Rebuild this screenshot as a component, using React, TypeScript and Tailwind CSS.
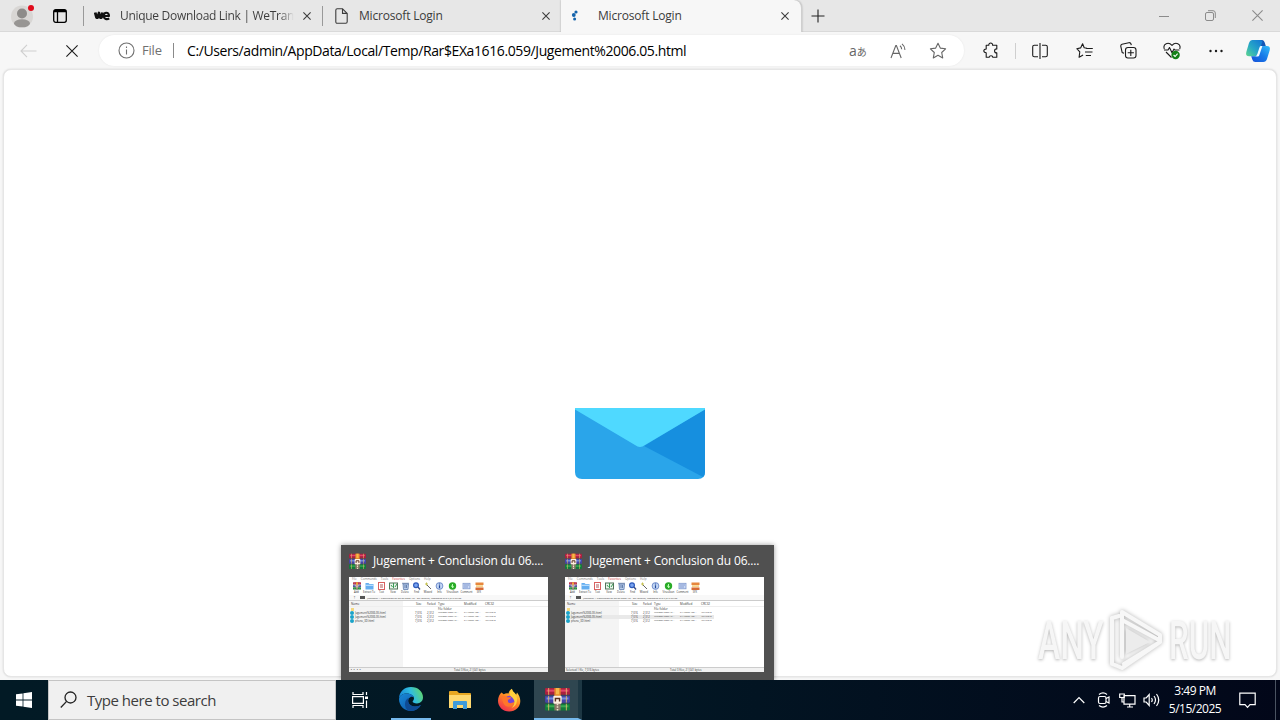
import React from "react";

type IconProps = { className?: string; w?: number; h?: number; children: React.ReactNode; sw?: number };

function Icon({ className = "", w = 20, h = 20, sw = 1.1, children }: IconProps) {
  return (
    <svg className={"shrink-0 " + className} width={w} height={h} viewBox={`0 0 ${w} ${h}`} fill="none" stroke="currentColor" strokeWidth={sw}>
      {children}
    </svg>
  );
}

function CloseX({ size = 8 }: { size?: number }) {
  return (
    <Icon w={size} h={size}>
      <path d={`M.4 .4L${size - 0.4} ${size - 0.4}M${size - 0.4} .4L.4 ${size - 0.4}`} />
    </Icon>
  );
}

function WinRar({ size }: { size: number }) {
  return (
    <svg className="shrink-0" width={size} height={size} viewBox="0 0 24 24">
      <rect x="0" y="1" width="24" height="6.500" rx="1" fill="#a8213f" />
      <rect x="1.500" y="2.500" width="21" height="2" fill="#e2456b" />
      <rect x="0" y="8.500" width="24" height="6.500" rx="1" fill="#4545a5" />
      <rect x="1.500" y="10" width="21" height="2" fill="#718de0" />
      <rect x="0" y="16" width="24" height="6.500" rx="1" fill="#137a3b" />
      <rect x="1.500" y="17.500" width="21" height="2" fill="#37aa50" />
      <path d="M3.500 1v21.500M20.500 1v21.500" stroke="#e8bd6a" strokeWidth=".8" strokeDasharray="6.500 1" />
      <rect x="9" y="1" width="6" height="9" fill="#e58a2a" />
      <rect x="10.500" y="1" width="3" height="6" fill="#f7b94a" />
      <rect x="9" y="15" width="6" height="7.500" fill="#8a7767" />
      <path d="M12 16v7" stroke="#efe3cc" strokeWidth="1.500" strokeDasharray="1.500 1" />
      <rect x="8" y="8.500" width="8" height="7.500" rx="1" fill="#fff0df" />
      <path d="M10 14v-3h4v3" stroke="#5a3020" strokeWidth="1.400" fill="none" />
    </svg>
  );
}

function TabStrip() {
  return (
    <div className="flex h-8 items-center border-b border-[#d9d9d9] bg-[#e7e7e7] text-[12px] text-[#3c3c3c]">
      <svg className="ml-[10px] shrink-0" width="25" height="26" viewBox="0 0 25 26">
        <circle cx="12" cy="13.500" r="11" fill="#d8d6d4" />
        <circle cx="12" cy="10.500" r="5" fill="#8d8b89" />
        <ellipse cx="12" cy="20.300" rx="8" ry="4" fill="#979593" />
        <circle cx="21" cy="5" r="3" fill="#e00b1c" />
      </svg>
      <Icon className="ml-[18px] text-black" w={14} h={14} sw={1.3}>
        <rect x=".7" y=".7" width="12.600" height="12.600" rx="2" />
        <path d="M1 2.500h12M1 1.600h12" />
        <path d="M4.500 3v10" />
      </Icon>
      <div className="ml-[16px] h-5 w-px bg-[#999]" />
      <div className="flex w-[238px] items-center pl-[10px]">
        <svg className="shrink-0" width="17" height="10" viewBox="0 0 17 10" fill="none" stroke="#111" strokeWidth="2.800" strokeLinejoin="round">
          <path d="M1.200 1.500L2.500 6.500h1.300L5 2l1.200 4.500h1.300L8.600 1.500" />
          <path d="M10.400 5h4.600c0-4.500-5.200-4.300-5.200-.2 0 3.600 3.400 4 5.400 2.600" strokeWidth="2.100" />
        </svg>
        <div className="ml-[9px] w-[174px] overflow-hidden whitespace-nowrap bg-gradient-to-r from-[#3c3c3c] from-92% to-transparent bg-clip-text tracking-[-0.3px] text-transparent">Unique Download Link | WeTrans</div>
        <div className="ml-auto mr-[11px] flex"><CloseX /></div>
      </div>
      <div className="h-5 w-px bg-[#999]" />
      <div className="flex w-[238px] items-center pl-[12px]">
        <Icon w={13} h={16}>
          <path d="M.8 2.200Q.8.800 2.200.800h5.300l4.700 4.600v8.400q0 1.400-1.400 1.400H2.200Q.8 15.200.8 13.800zM7.500.8v4.600h4.700" />
        </Icon>
        <div className="ml-[11px] whitespace-nowrap tracking-[-0.190px]">Microsoft Login</div>
        <div className="ml-auto mr-[11px] flex"><CloseX /></div>
      </div>
      <div className="-mb-px flex h-8 w-[241px] items-center rounded-tr-lg border-r border-[#cfcfcf] bg-[#f7f7f7] pl-[10px] shadow-[0_0_2px_rgba(0,0,0,.3)]">
        <svg className="shrink-0" width="10" height="14" viewBox="0 0 10 14" fill="#1464ac">
          <circle cx="5" cy="3" r="1.600" /><circle cx="2.800" cy="6" r="1.900" /><circle cx="3.600" cy="10" r="1.500" />
        </svg>
        <div className="ml-[17px] whitespace-nowrap tracking-[-0.190px]">Microsoft Login</div>
        <div className="ml-auto mr-[12px] flex"><CloseX /></div>
      </div>
      <Icon className="ml-[9px] text-[#222]" w={14} h={14}>
        <path d="M7 .5v13M.5 7h13" />
      </Icon>
      <div className="ml-auto flex items-center gap-[36px] pr-[17px] text-[#8b8b8b]">
        <Icon w={10} h={10} sw={1}><path d="M0 5.500h10" /></Icon>
        <Icon w={11} h={11} sw={1}>
          <rect x=".5" y="2.500" width="8" height="8" rx="1.500" />
          <path d="M3 .7h5q2.300 0 2.300 2.300v5" />
        </Icon>
        <CloseX size={11} />
      </div>
    </div>
  );
}

function Toolbar() {
  return (
    <div className="flex h-[37px] shrink-0 items-center bg-[#f7f7f7] text-[#1b1b1b]">
      <Icon className="ml-[20px] text-[#cfcfcf]" w={17} h={14}><path d="M7 .8L1 7l6 6.200M1 7h15.500" /></Icon>
      <div className="ml-[29px] flex"><CloseX size={12} /></div>
      <div className="ml-[21px] flex h-[31px] w-[865px] items-center rounded-full bg-white pl-[19px] text-[14px] text-[#707070] shadow-[0_0_2px_rgba(0,0,0,.08)]">
        <Icon w={17} h={17}>
          <circle cx="8.500" cy="8.500" r="7.500" /><path d="M8.500 7.500v5M8.500 4.600v1.300" />
        </Icon>
        <div className="ml-[7px] w-[31px] text-[13px] tracking-[-0.200px]">File</div>
        <div className="h-[15px] w-px bg-[#8a8a8a]" />
        <div className="ml-[13px] whitespace-nowrap tracking-[-0.395px] text-black">C:/Users/admin/AppData/Local/Temp/Rar$EXa1616.059/Jugement%2006.05.html</div>
        <div className="ml-auto flex items-center pr-[17px] text-[#666]">
          <div className="flex w-[18px] items-baseline leading-none"><span className="text-[14px]">a</span><span className="font-['Noto_Sans_CJK_JP',sans-serif] text-[10px]">あ</span></div>
          <Icon className="ml-[23px]" w={17} h={16}>
            <path d="M1 15L5.800 2.500h.6L11.200 15M2.900 10.400h6.400M10 2.700q1.600 1.300 1.700 3.600M12 .9q2.800 2.200 3 6" />
          </Icon>
          <Icon className="ml-[22px]" w={18} h={18}>
            <path d="M9 1.200l2.300 4.900 5.300.7-3.900 3.700 1 5.400L9 13.300l-4.700 2.600 1-5.400L1.400 6.800l5.300-.7z" strokeLinejoin="round" />
          </Icon>
        </div>
      </div>
      <Icon className="ml-[19px]" w={17} h={18}>
        <path d="M3.200 3.200h2.600c-.4-3 4.200-3 3.800 0h4.200v3.700c-3 0-3 4 0 4v4.300H9.800c0-2-3.600-2-3.600 0h-3v-4.400C0 10.400 0 7.300 3.200 7z" strokeLinejoin="round" />
      </Icon>
      <div className="ml-[15px] h-4 w-px bg-[#cfcfcf]" />
      <Icon className="ml-[16px]" w={16} h={16}>
        <path d="M6 2.200H2.300Q.7 2.200.7 3.800v8.400q0 1.600 1.600 1.600H6M8 0v16M10 2.200h3.700q1.600 0 1.600 1.600v8.400q0 1.600-1.600 1.600H10" />
      </Icon>
      <Icon className="ml-[28px]" w={18} h={18}>
        <path d="M11 6.200L8.200 5.800 6.600 1.800 4.600 5.900.8 6.700l3 3.100-.7 5.500 4-2.200M9.800 6.500h7M9 10h7.500M9.800 13.500H15" strokeLinejoin="round" />
      </Icon>
      <Icon className="ml-[26px]" w={17} h={17}>
        <rect x="5.500" y="5.500" width="10.500" height="10.500" rx="2.500" />
        <path d="M10.800 7.700v6.200M7.700 10.800h6.200M4 11.300L2.200 10.500.8 4.300Q.6 2.600 2 2.200l6.800-1.500q1.800-.2 2.200 1.300l.3 1.200" />
      </Icon>
      <Icon className="ml-[26px]" w={18} h={18}>
        <path d="M1.300 7C-.5 1.500 5.500-.5 9 3.300c3.500-3.800 9.500-1.800 7.700 3.700M1 8h4l1.500-2.500L9 10.800 11 7l.8 1h4.700M3 10l5.500 5.500" strokeLinejoin="round" />
        <circle cx="12.600" cy="13" r="4.200" fill="#138016" stroke="none" />
        <path d="M10.600 13l1.500 1.500 2.500-2.800" stroke="#fff" />
      </Icon>
      <Icon className="ml-[27px]" w={16} h={4}>
        <g fill="currentColor" stroke="none"><circle cx="2.500" cy="2" r="1.200" /><circle cx="8" cy="2" r="1.200" /><circle cx="13.500" cy="2" r="1.200" /></g>
      </Icon>
      <svg className="ml-[21px] shrink-0" width="26" height="24" viewBox="0 0 26 24">
        <defs>
          <linearGradient id="cpA" x1="0" y1="1" x2="1" y2="0"><stop stopColor="#5fd68d" /><stop offset=".45" stopColor="#27a8c6" /><stop offset="1" stopColor="#1274d6" /></linearGradient>
          <linearGradient id="cpB" x1="0" y1="1" x2="1" y2="0"><stop stopColor="#1750d8" /><stop offset=".5" stopColor="#1679e8" /><stop offset="1" stopColor="#31bdfa" /></linearGradient>
        </defs>
        <path d="M14.500 1h2.700q1.800 0 2.500 2.500L20.800 7H15z" fill="#1256b6" />
        <path d="M7.500 1h8q2.300 0 1.700 2.200L13.200 15q-.8 2.300-3.200 2.300H4.200Q.2 17.300 1.300 13L4 4Q5 1 7.500 1z" fill="url(#cpA)" />
        <path d="M18.300 23h-8q-2.200 0-3-2.500L6.200 17.300h3.300q2 0 2.800-2.400l2-5.800q.7-2.100 2.700-2.100h4.800q4 0 2.900 4.300L22 20q-1 3-3.700 3z" fill="url(#cpB)" />
        <path d="M15.800 7h1.600l-3.200 9.500q-.3 1-1.500 1H9.500q2 0 2.800-2.500l2-6q.5-2 1.500-2z" fill="#f2fbff" />
      </svg>
    </div>
  );
}

function Envelope() {
  return (
    <svg width="130" height="71" viewBox="0 0 130 71">
      <path d="M0 0h130v64q0 7-7 7H7q-7 0-7-7z" fill="#2aa5ea" />
      <path d="M130 1v63q0 3-2 5L69 38z" fill="#168fdf" />
      <path d="M0 0h130v1.500L70 37q-5 4-10 0L0 1.500z" fill="#4fd9ff" />
    </svg>
  );
}

const tools = ["Add", "Extract To", "Test", "View", "Delete", "Find", "Wizard", "Info", "VirusScan", "Comment", "SFX"];
const toolWidths = ["w-[11px]", "w-[14px]", "w-[11px]", "w-[12px]", "w-[12px]", "w-[11px]", "w-[12px]", "w-[11px]", "w-[15px]", "w-[13px]", "w-[12px]"];

function ToolGlyph({ i }: { i: number }) {
  const s = { width: 9, height: 8, viewBox: "0 0 9 8", fill: "none" };
  switch (i) {
    case 0: return <WinRar size={8} />;
    case 1: return <svg {...s}><path d="M.5 1h3l1 1h4v5.500h-8z" fill="#64aef0" /><path d="M.5 3.300h8" stroke="#c6e5ff" /></svg>;
    case 2: return <svg {...s}><rect x="1.500" y=".5" width="6" height="7" fill="#fff" stroke="#d96060" /><path d="M3 3h3M3 5h3" stroke="#a03030" strokeWidth=".8" /></svg>;
    case 3: return <svg {...s}><rect x=".5" y="1" width="8" height="6" fill="#eaf5ec" stroke="#52745b" /><path d="M4.500 1v5M2 3l1.500 2M6 5l2-3" stroke="#3a9a56" /></svg>;
    case 4: return <svg {...s}><path d="M2 2h5.500L7 7.500H2.500z" fill="#b8cbe9" stroke="#627fae" strokeWidth=".8" /><path d="M1 1.300h7M4 3v3M5.500 3v3" stroke="#526f9e" strokeWidth=".8" /></svg>;
    case 5: return <svg {...s}><circle cx="4" cy="3.200" r="2.400" fill="#79a4f1" stroke="#2e5abb" strokeWidth="1.200" /><path d="M6 5l2 2.500" stroke="#354c88" strokeWidth="1.300" /></svg>;
    case 6: return <svg {...s}><path d="M2 2l5 5" stroke="#666" /><path d="M1 2h3M2.500 .5v3" stroke="#c7c254" /></svg>;
    case 7: return <svg {...s}><circle cx="4.500" cy="4" r="3.400" fill="#c5d8f5" stroke="#5a7ac0" strokeWidth=".8" /><path d="M4.500 3.300v3M4.500 1.500v1" stroke="#23499c" strokeWidth="1.200" /></svg>;
    case 8: return <svg {...s}><circle cx="4.500" cy="4" r="3.700" fill="#29ab27" /><path d="M4.500 2v4M3 4l3 1" stroke="#baffb2" /></svg>;
    case 9: return <svg {...s}><rect x="1" y="1.300" width="7" height="5.500" fill="#c9d8f5" stroke="#8099ce" strokeWidth=".8" /><path d="M2 3h5M2 5h4" stroke="#6682be" strokeWidth=".7" /></svg>;
    default: return <svg {...s}><rect x=".5" y=".5" width="8" height="2.500" fill="#e7873d" /><rect x="1" y="3.200" width="7" height="2" fill="#f7d48b" /><rect x=".5" y="5.500" width="8" height="2.500" fill="#d76a35" /></svg>;
  }
}

const files = ["Jugement%2006.05.html", "Jugement%2006.05.html", "phone_3D.html"];

function MiniWindow({ selected, status }: { selected: number; status: string }) {
  return (
    <div className="flex h-[95px] w-[199px] flex-col overflow-hidden bg-white text-[3px] leading-[4px] text-[#333]">
      <div className="flex h-[5px] shrink-0 gap-[4px] pl-[3px] text-[#777]">
        <span>File</span><span>Commands</span><span>Tools</span><span className="text-[#c33]">Favorites</span><span>Options</span><span>Help</span>
      </div>
      <div className="flex h-[12px] shrink-0 pl-[2px]">
        {tools.map((name, i) => (
          <div key={name} className={"flex shrink-0 flex-col items-center whitespace-nowrap " + toolWidths[i]}>
            <div className="flex h-[8px]"><ToolGlyph i={i} /></div>
            <span className="text-[2.600px]">{name}</span>
          </div>
        ))}
      </div>
      <div className="mt-px flex h-[6px] shrink-0 items-center gap-[2px] border-b border-[#ccc] bg-[#f8f8f8] pl-[4px]">
        <span>↑</span><span className="ml-[2px] h-[3px] w-[5px] bg-[#555]" /><span className="whitespace-nowrap text-[2.500px]">Jugement + Conclusion du 06.05.2025.zip - ZIP archive, unpacked size 7,347 bytes</span>
      </div>
      <div className="flex min-h-0 grow">
        <div className="w-[54px] shrink-0 bg-[#f4f4f4]" />
        <div className="-ml-[54px] grow pt-px">
          <div className="grid h-[5px] grid-cols-[54px_24px_11px_26px_21px_1fr] border-b border-[#eee] whitespace-nowrap">
            <span className="pl-[2px]">Name</span><span className="pl-[13px]">Size</span><span className="text-[2.600px]">Packed</span><span>Type</span><span>Modified</span><span>CRC32</span>
          </div>
          <div className="grid h-[4px] grid-cols-[89px_1fr]">
            <span className="ml-[2px] mt-[1px] h-[3px] w-[3px] bg-[#f4d77e]" /><span>File folder</span>
          </div>
          {files.map((f, i) => (
            <div key={i} className={"grid h-[4px] w-[149px] grid-cols-[54px_24px_11px_26px_21px_1fr] whitespace-nowrap " + (i === selected ? "bg-[#e9e9e9]" : "")}>
              <span className="flex items-center gap-[1px] pl-[1px] text-[2.700px]"><span className="h-[4px] w-[4px] shrink-0 rounded-full bg-[#1ba3c9]" />{f}</span>
              <span className="pl-[12px] text-[2.700px]">7,016</span><span className="text-[2.700px]">2,312</span><span className="text-[2.200px]">Microsoft Edge HT...</span><span className="text-[2.100px]">5/14/2025 1:08 ...</span><span className="text-[2.300px]">4FF1C3A0</span>
            </div>
          ))}
        </div>
      </div>
      <div className="flex h-[5px] shrink-0 border-t border-[#ccc] bg-[#f1f1f1] pl-[1px] text-[2.700px] leading-[4px]">
        <span className="w-[104px]">{status}</span><span>Total 3 files, 21,041 bytes</span>
      </div>
    </div>
  );
}

function Preview({ selected, status }: { selected: number; status: string }) {
  return (
    <div className="w-[199px]">
      <div className="flex h-8 items-center gap-[7px] text-[12px] text-white">
        <WinRar size={17} />
        <span className="whitespace-nowrap tracking-[-0.160px]">Jugement + Conclusion du 06....</span>
      </div>
      <MiniWindow selected={selected} status={status} />
    </div>
  );
}

function Watermark() {
  return (
    <div className="absolute left-[1038px] top-[606px] flex h-[70px] w-[194px] items-center justify-between text-[53px] font-medium leading-none text-[#f6f6f6] [font-family:Roboto,sans-serif] [text-shadow:0_1px_4px_rgba(0,0,0,.3)]">
      <div className="w-[65px]"><span className="inline-block origin-left scale-x-[0.630]">ANY</span></div>
      <svg className="-ml-[4px] shrink-0 drop-shadow-[0_0_2px_rgba(0,0,0,.3)]" width="60" height="66" viewBox="0 0 60 66" fill="none" stroke="#f7f7f7" strokeWidth="4" strokeLinejoin="round" strokeLinecap="round">
        <path d="M18 49V4l38 23v7L18 60l-7-3M18 12l37 20M8 10v46l8 3M8 10l7-2M20 56l36-22" />
        <path d="M22 20v26l24-12z" fill="#ececec" stroke="none" />
      </svg>
      <div className="w-[63px]"><span className="inline-block origin-left scale-x-[0.590]">RUN</span></div>
    </div>
  );
}

function Edge() {
  return (
    <svg width="26" height="26" viewBox="0 0 26 26">
      <defs>
        <linearGradient id="edA" x1="0" y1=".5" x2="1" y2=".2"><stop stopColor="#1686d8" /><stop offset=".5" stopColor="#2fbce0" /><stop offset="1" stopColor="#63d863" /></linearGradient>
        <linearGradient id="edB" x1="0" y1="0" x2="1" y2="1"><stop stopColor="#1989d8" /><stop offset="1" stopColor="#0b4fa0" /></linearGradient>
      </defs>
      <path d="M1 13C1 5.500 6.500 1 13 1c7.500 0 12 5 12 10.300 0 4-3 6.200-6 6.200-2.800 0-4.400-1.200-4.400-2 0-.6 1.400-1 1.400-3.200C16 9.700 12.500 7.500 9 7.500 5 7.500 1.500 9.500 1 13z" fill="url(#edA)" />
      <path d="M1 13c.5-3.500 4-5.500 8-5.500 3.500 0 6.500 2 7 4-1-.8-2.500-1-3.700-.3C8 13.500 10 20.500 17 20.500c2.700 0 4.800-1 6-1.500C20.500 23 17 25 13 25 6 25 1 19.500 1 13z" fill="url(#edB)" />
      <path d="M9.500 24.300C6 21 6 13.500 11 11.800c-2 3.500 0 8.700 6 8.700 2.700 0 4.800-1 6-1.500-3 5-8.500 6.800-13.500 5.300z" fill="#0f4b94" />
    </svg>
  );
}

function Firefox() {
  return (
    <svg width="24" height="24" viewBox="0 0 24 24">
      <defs>
        <linearGradient id="ffA" x1=".8" y1="0" x2=".2" y2="1"><stop stopColor="#ffe14a" /><stop offset=".45" stopColor="#ff8a22" /><stop offset="1" stopColor="#ef2853" /></linearGradient>
      </defs>
      <path d="M4.500 4.500l2.200 1.800Q9 5 11.500 5.500C12 3 13.500 1.500 15 .7c0 3 2.700 3.500 4.200 6l.8-2.200c2 2.500 3.300 5.300 3.300 8.500C23.300 19 18.500 23.500 12.200 23.500S1 19 1 12.800C1 9 2.500 6.500 4.500 4.500z" fill="url(#ffA)" />
      <circle cx="12.500" cy="13" r="5.300" fill="#7542d8" />
      <path d="M5 8.500c2-.8 4-.3 5 .8h4c0 1.500-1.800 2-3 2.500-.6 2 .8 3.700 3 3.300 2-.4 3-1.600 4-1-1 3.500-3.500 5-6.500 4.700C7.500 18.500 5 14.500 5 8.500z" fill="#ff762a" />
      <path d="M15 1c0 3 6 5 5 12-.5 4-3 6-5.500 7 5-5 3-9-.5-11.500C12 7 13 3 15 1z" fill="#ffcf3c" />
    </svg>
  );
}

function Taskbar() {
  return (
    <div className="flex h-10 shrink-0 items-center bg-gradient-to-r from-[#021a25] via-[#021724] to-[#020719] text-white">
      <div className="flex w-12 justify-center">
        <svg width="16" height="16" viewBox="0 0 16 16" fill="#fff"><path d="M0 2.300l6.600-.9v6.100H0zM7.400 1.300L16 0v7.500H7.400zM0 8.400h6.600v6.200L0 13.700zM7.400 8.400H16V16l-8.600-1.200z" /></svg>
      </div>
      <div className="flex h-10 w-[288px] items-center border border-[#c4c4c4] bg-[#f0f0f0] pl-[11px] text-[15px] text-[#3d3d3d]">
        <Icon className="text-[#222]" w={18} h={18} sw={1.3}><circle cx="10.500" cy="6.500" r="5.500" /><path d="M6.600 10.400L.8 16.500" /></Icon>
        <span className="ml-[9px] whitespace-nowrap tracking-[-0.480px]">Type here to search</span>
      </div>
      <div className="flex w-[50px] justify-center pr-[2px]">
        <Icon w={17} h={16} sw={1.2}><path d="M1 0v2.500h10V0M1 16v-2.500h10V16M.6 4.600h10.800v6.800H.6zM14.500 0v3M14.500 8.500V16" /><rect x="13" y="4.500" width="3" height="2.500" fill="#fff" stroke="none" /></Icon>
      </div>
      <div className="ml-[5px] flex h-10 w-10 items-center justify-center border-b-2 border-[#76b9ed]"><Edge /></div>
      <div className="ml-[9px] flex w-10 justify-center">
        <svg width="22" height="20" viewBox="0 0 22 20">
          <path d="M0 2q0-1 1-1h7l2 2h11q1 0 1 1v14H0z" fill="#e8a823" /><path d="M0 5h22v13H0z" fill="#ffd970" />
          <path d="M4 12q0-1 1-1h12q1 0 1 1v7h-4v-4H8v4H4z" fill="#3f9bd9" />
        </svg>
      </div>
      <div className="ml-[9px] flex w-10 justify-center"><Firefox /></div>
      <div className="ml-[5px] flex h-10 w-12 items-center justify-center border-b-2 border-r-4 border-[#76b9ed] border-r-[#1d3743] bg-[#2f4650] pl-[2px]"><WinRar size={25} /></div>
      <div className="ml-auto flex items-center">
        <Icon w={12} h={8} sw={1.2}><path d="M.7 7L6 1.500 11.300 7" /></Icon>
        <Icon className="ml-[12px]" w={13} h={16} sw={1.2}><path d="M2 2.500Q6-.8 10 2.500M2 13.500q4 3.300 8 0M9 6.500l3-1.500v6L9 9.500" /><rect x="1.500" y="4.500" width="7.500" height="7" rx="1.500" /></Icon>
        <Icon className="ml-[9px]" w={17} h={15} sw={1.2}><path d="M5 2.600h11v8.500H5zM8 14h6M10.700 11v3M.7 1h4.600v3.500H.7zM3 4.500V9h2" /></Icon>
        <Icon className="ml-[7px]" w={17} h={14} sw={1.2}><path d="M1 5h2.200l3-3.500v11L3.200 9H1zM8.500 5q1.500 2 0 4M11 3q3 4 0 8M13.500 1q4.500 6 0 12" /></Icon>
        <div className="ml-[4px] w-[62px] text-center text-[12px] leading-[18px] tracking-[-0.5px]"><div>3:49 PM</div><div>5/15/2025</div></div>
        <Icon className="ml-[13px]" w={17} h={17} sw={1.2}><path d="M.8 1.200h15.400v11.500H11l-2.500 2.600L6 12.700H.8z" /></Icon>
        <div className="ml-[19px] h-10 w-px bg-[#4a5361]" /><div className="w-[4px]" />
      </div>
    </div>
  );
}

export default function App() {
  return (
    <div className="relative flex h-[720px] w-[1280px] flex-col overflow-hidden bg-[#f7f7f7] [font-family:'Open_Sans','Noto_Sans_CJK_JP',sans-serif]">
      <TabStrip />
      <Toolbar />
      <div className="mx-[3px] mb-[3px] flex grow justify-center rounded-lg border border-[#e6e6e6] bg-white pt-[338px] shadow-[0_0_2px_rgba(0,0,0,.15)]">
        <Envelope />
      </div>
      <Taskbar />
      <div className="absolute left-[341px] top-[545px] flex h-[135px] w-[433px] gap-[17px] bg-[#505050] pl-[8px] shadow-[0_0_5px_rgba(0,0,0,.4)] [clip-path:inset(-10px_-10px_0_-10px)]">
        <Preview selected={-1} status="▪▪ ▪▪" />
        <Preview selected={1} status="Selected 1 file, 7,016 bytes" />
      </div>
      <Watermark />
    </div>
  );
}
